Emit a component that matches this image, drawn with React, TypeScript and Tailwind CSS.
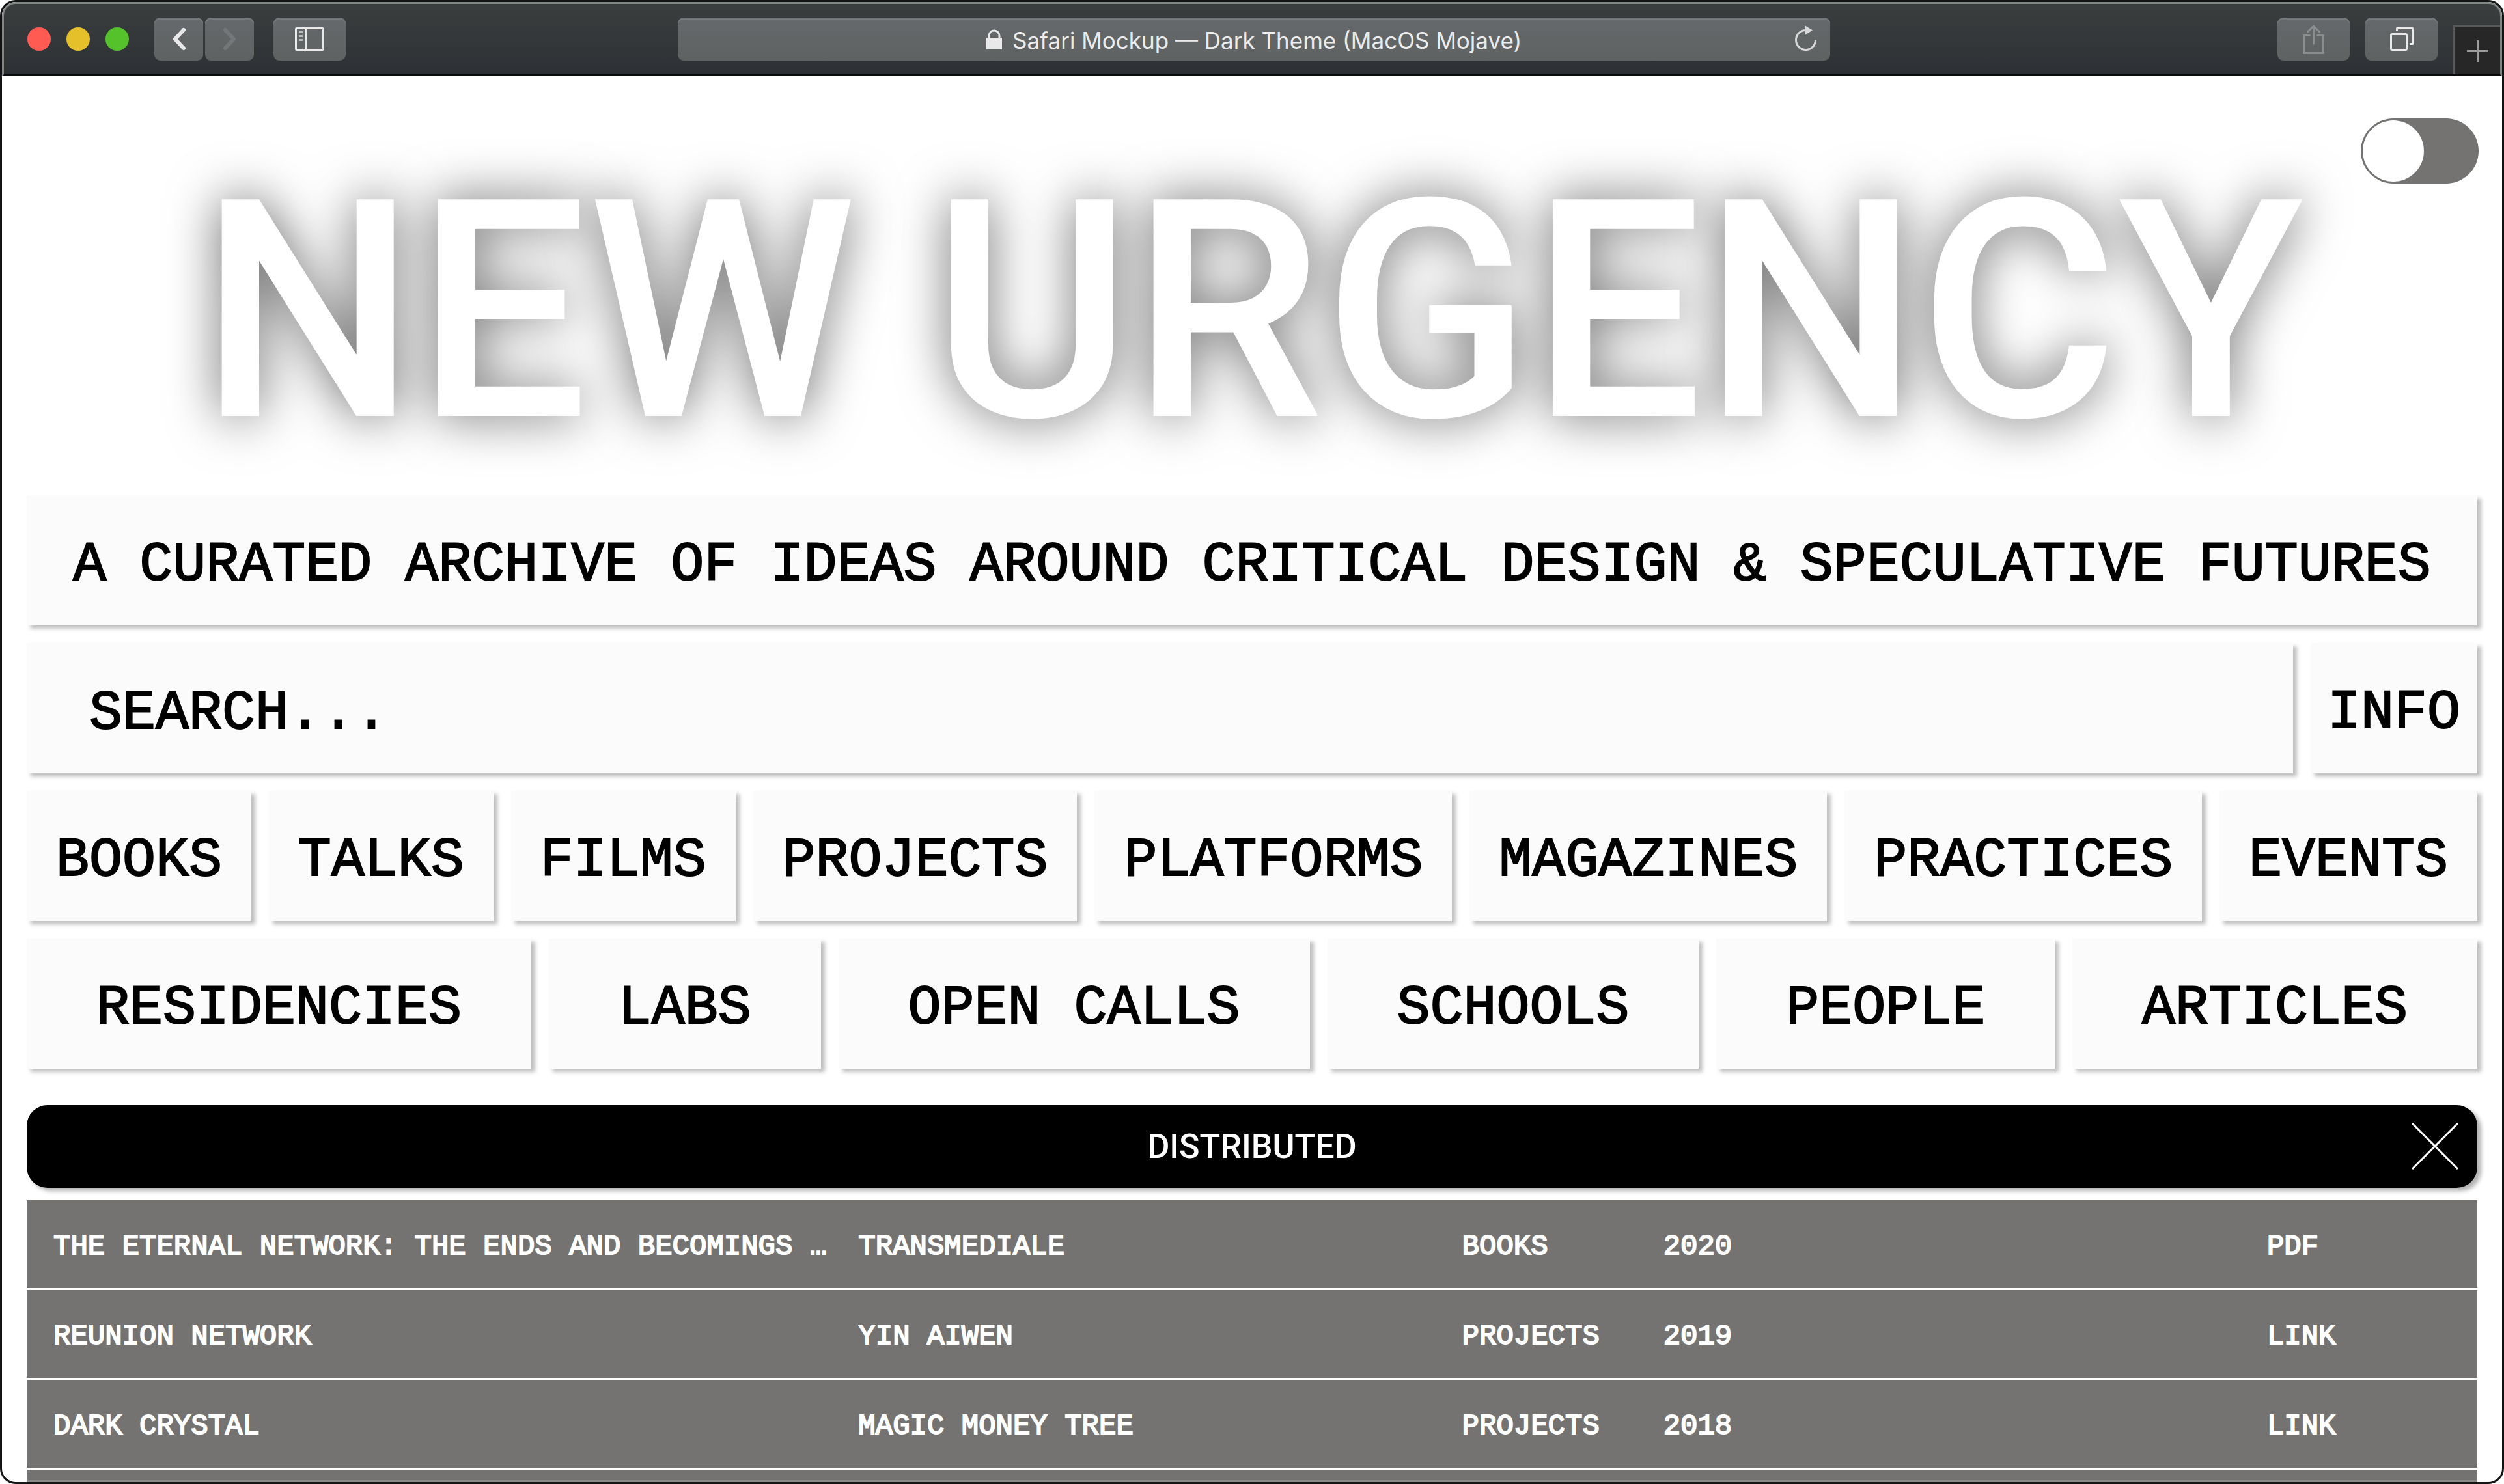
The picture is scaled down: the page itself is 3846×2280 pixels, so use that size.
import React from "react";

const mono = "font-['Liberation_Mono','DejaVu_Sans_Mono',monospace]";

const rows = [
  ["THE ETERNAL NETWORK: THE ENDS AND BECOMINGS …", "TRANSMEDIALE", "BOOKS", "2020", "PDF"],
  ["REUNION NETWORK", "YIN AIWEN", "PROJECTS", "2019", "LINK"],
  ["DARK CRYSTAL", "MAGIC MONEY TREE", "PROJECTS", "2018", "LINK"],
];

const categories = [
  ["BOOKS", "TALKS", "FILMS", "PROJECTS", "PLATFORMS", "MAGAZINES", "PRACTICES", "EVENTS"],
  ["RESIDENCIES", "LABS", "OPEN CALLS", "SCHOOLS", "PEOPLE", "ARTICLES"],
];

const chromeButton =
  "flex h-[66px] items-center justify-center rounded-[9px] bg-linear-to-b from-[#66696c] to-[#5e6261] shadow-[inset_0_3px_0_#74787b]";

const tile = "bg-[#fbfbfb] pt-4 [-webkit-text-stroke:2px_black] shadow-[6px_5px_6px_rgba(0,0,0,0.25)]";

function Toolbar() {
  return (
    <header className="relative flex h-[114px] shrink-0 items-center justify-between border-3 border-x-[#7f8583] border-t-[#7f8583] border-b-[#0b0b0c] rounded-t-[21px] bg-linear-to-b from-[#3b3e3e] to-[#2d3135] pl-9 pr-24">
      <div className="flex items-center">
        <div className="flex gap-6">
          <button aria-label="Close window" className="size-9 rounded-full bg-[#ff5b52]" />
          <button aria-label="Minimise window" className="size-9 rounded-full bg-[#e6c02a]" />
          <button aria-label="Zoom window" className="size-9 rounded-full bg-[#55c22c]" />
        </div>
        <div className="ml-[39px] flex gap-[3px]">
          <button aria-label="Back" className={`${chromeButton} w-[75px]`}>
            <svg width="24" height="42" viewBox="0 0 24 42" fill="none" stroke="#e9e9ea" strokeWidth="6" strokeLinecap="round" strokeLinejoin="round">
              <path d="M19 7 6 21l13 14" />
            </svg>
          </button>
          <button aria-label="Forward" className={`${chromeButton} w-[75px]`}>
            <svg width="24" height="42" viewBox="0 0 24 42" fill="none" stroke="#747779" strokeWidth="6" strokeLinecap="round" strokeLinejoin="round">
              <path d="m5 7 13 14L5 35" />
            </svg>
          </button>
        </div>
        <button aria-label="Show sidebar" className={`${chromeButton} ml-[30px] w-[111px]`}>
          <svg width="45" height="36" viewBox="0 0 45 36" fill="none">
            <rect x="1.5" y="1.5" width="42" height="33" rx="1.5" stroke="#e9e9ea" strokeWidth="3" />
            <path d="M16.500 1.500v33" stroke="#e9e9ea" strokeWidth="3" />
            <path d="M6 7.500h6M6 13.500h6M6 19.500h6" stroke="#b9bbbc" strokeWidth="3" />
          </svg>
        </button>
      </div>

      <div className={`${chromeButton} absolute left-[27%] right-[1029px] top-[21px]`}>
        <div className="flex items-center gap-4 pt-[3px]">
          <svg width="24" height="36" viewBox="0 0 24 36" fill="none">
            <path d="M0 14h24v18H0z" fill="#e9e9ea" />
            <path d="M4 15v-4a8 8 0 0 1 16 0v4" stroke="#e9e9ea" strokeWidth="3" />
          </svg>
          <span className="font-[Inter,sans-serif] text-[35px] leading-[48px] whitespace-nowrap text-[#ececec]">
            Safari Mockup — Dark Theme (MacOS Mojave)
          </span>
        </div>
        <button aria-label="Reload" className="absolute right-[21px] top-3">
          <svg width="33" height="39" viewBox="0 0 33 39" fill="none">
            <path d="M31.500 22.500a15 15 0 1 1-15-15" stroke="#d9d9d9" strokeWidth="3" />
            <path d="M15 0v15l12-7.500z" fill="#d9d9d9" />
          </svg>
        </button>
      </div>

      <div className="flex gap-6">
        <button aria-label="Share" className={`${chromeButton} w-[111px]`}>
          <svg width="33" height="45" viewBox="0 0 33 45" fill="none" stroke="#8b8d8e" strokeWidth="3" strokeLinecap="round" strokeLinejoin="round">
            <path d="M10.500 16.500h-9v27h30v-27h-9" />
            <path d="M16.500 29V2.500M7.500 11l9-9 9 9" />
          </svg>
        </button>
        <button aria-label="Show all tabs" className={`${chromeButton} w-[111px]`}>
          <svg width="36" height="36" viewBox="0 0 36 36" fill="none" stroke="#e9e9ea" strokeWidth="3" strokeLinejoin="round">
            <rect x="1.5" y="10.5" width="24" height="24" rx="1.5" />
            <path d="M10.500 6V1.500h24v24H30" />
          </svg>
        </button>
      </div>
      <button
        aria-label="New tab"
        className="absolute right-0 bottom-0 flex h-[75px] w-[72px] items-center justify-center border-t-3 border-l-3 border-[#57595a] bg-[#272728]"
      >
        <svg width="33" height="33" viewBox="0 0 33 33" stroke="#9b9b9b" strokeWidth="3">
          <path d="M16.500 0v33M0 16.500h33" />
        </svg>
      </button>
    </header>
  );
}

export default function App() {
  return (
    <div className="h-screen bg-white">
      <div className="relative flex h-full flex-col overflow-hidden rounded-[24px] border-3 border-[#141414] bg-white">
        <Toolbar />
        <main className="relative flex flex-col px-[38px]">
          <label className="absolute top-[65px] right-[36px] block h-[100px] w-[181px] cursor-pointer rounded-full bg-[#747371] p-[3px]">
            <input type="checkbox" role="switch" aria-label="Dark mode" className="peer sr-only" />
            <span className="block size-[94px] rounded-full bg-white peer-checked:ml-auto" />
          </label>

          <h1 className="pt-28 pb-8 text-center font-[Roboto,sans-serif] text-[468px] leading-[500px] font-medium whitespace-nowrap text-white [text-shadow:0_0_80px_rgba(0,0,0,0.6)]">
            NEW URGENCY
          </h1>

          <div className={`${mono} flex flex-col gap-[27px] text-[85px] leading-[184px] text-black`}>
            <p className={`${tile} text-center whitespace-nowrap`}>
              A CURATED ARCHIVE OF IDEAS AROUND CRITICAL DESIGN &amp; SPECULATIVE FUTURES
            </p>
            <div className="flex gap-[27px]">
              <input
                type="search"
                aria-label="Search"
                placeholder="SEARCH..."
                className={`${tile} h-[200px] min-w-0 flex-1 px-24 placeholder:text-black placeholder:opacity-100`}
              />
              <button className={`${tile} px-[26px]`}>INFO</button>
            </div>
            {categories.map((group, i) => (
              <nav key={i} className="flex gap-[27px]">
                {group.map((name) => (
                  <button key={name} className={`${tile} flex-auto`}>
                    {name}
                  </button>
                ))}
              </nav>
            ))}
          </div>

          <div className="relative mt-14 flex h-[127px] items-center justify-center rounded-[32px] bg-black shadow-[6px_5px_6px_rgba(0,0,0,0.3)]">
            <h2 className="font-[Roboto,sans-serif] text-[52px] leading-[64px] font-medium text-white">DISTRIBUTED</h2>
            <button aria-label="Close" className="absolute right-[29px] top-[27px]">
              <svg width="72" height="72" viewBox="0 0 72 72" stroke="white" strokeWidth="3">
                <path d="m1 1 70 70M71 1 1 71" />
              </svg>
            </button>
          </div>

          <table className={`${mono} mt-[19px] block text-[44px] leading-[127px] text-white [-webkit-text-stroke:2px_white]`}>
            <tbody className="flex flex-col gap-[3px]">
              {rows.map(([title, author, kind, year, link]) => (
                <tr key={title} className="grid grid-cols-12 gap-x-[27px] bg-[#747371] px-[41px] pt-2">
                  <td className="col-span-4 truncate">{title}</td>
                  <td className="col-span-3 truncate">{author}</td>
                  <td className="whitespace-nowrap">{kind}</td>
                  <td className="col-span-3">{year}</td>
                  <td>
                    <a href="#">{link}</a>
                  </td>
                </tr>
              ))}
              <tr className="block h-[135px] bg-[#747371]" />
            </tbody>
          </table>
        </main>
        <div className="pointer-events-none absolute inset-x-0 bottom-0 h-[3px] bg-white/15" />
      </div>
    </div>
  );
}
